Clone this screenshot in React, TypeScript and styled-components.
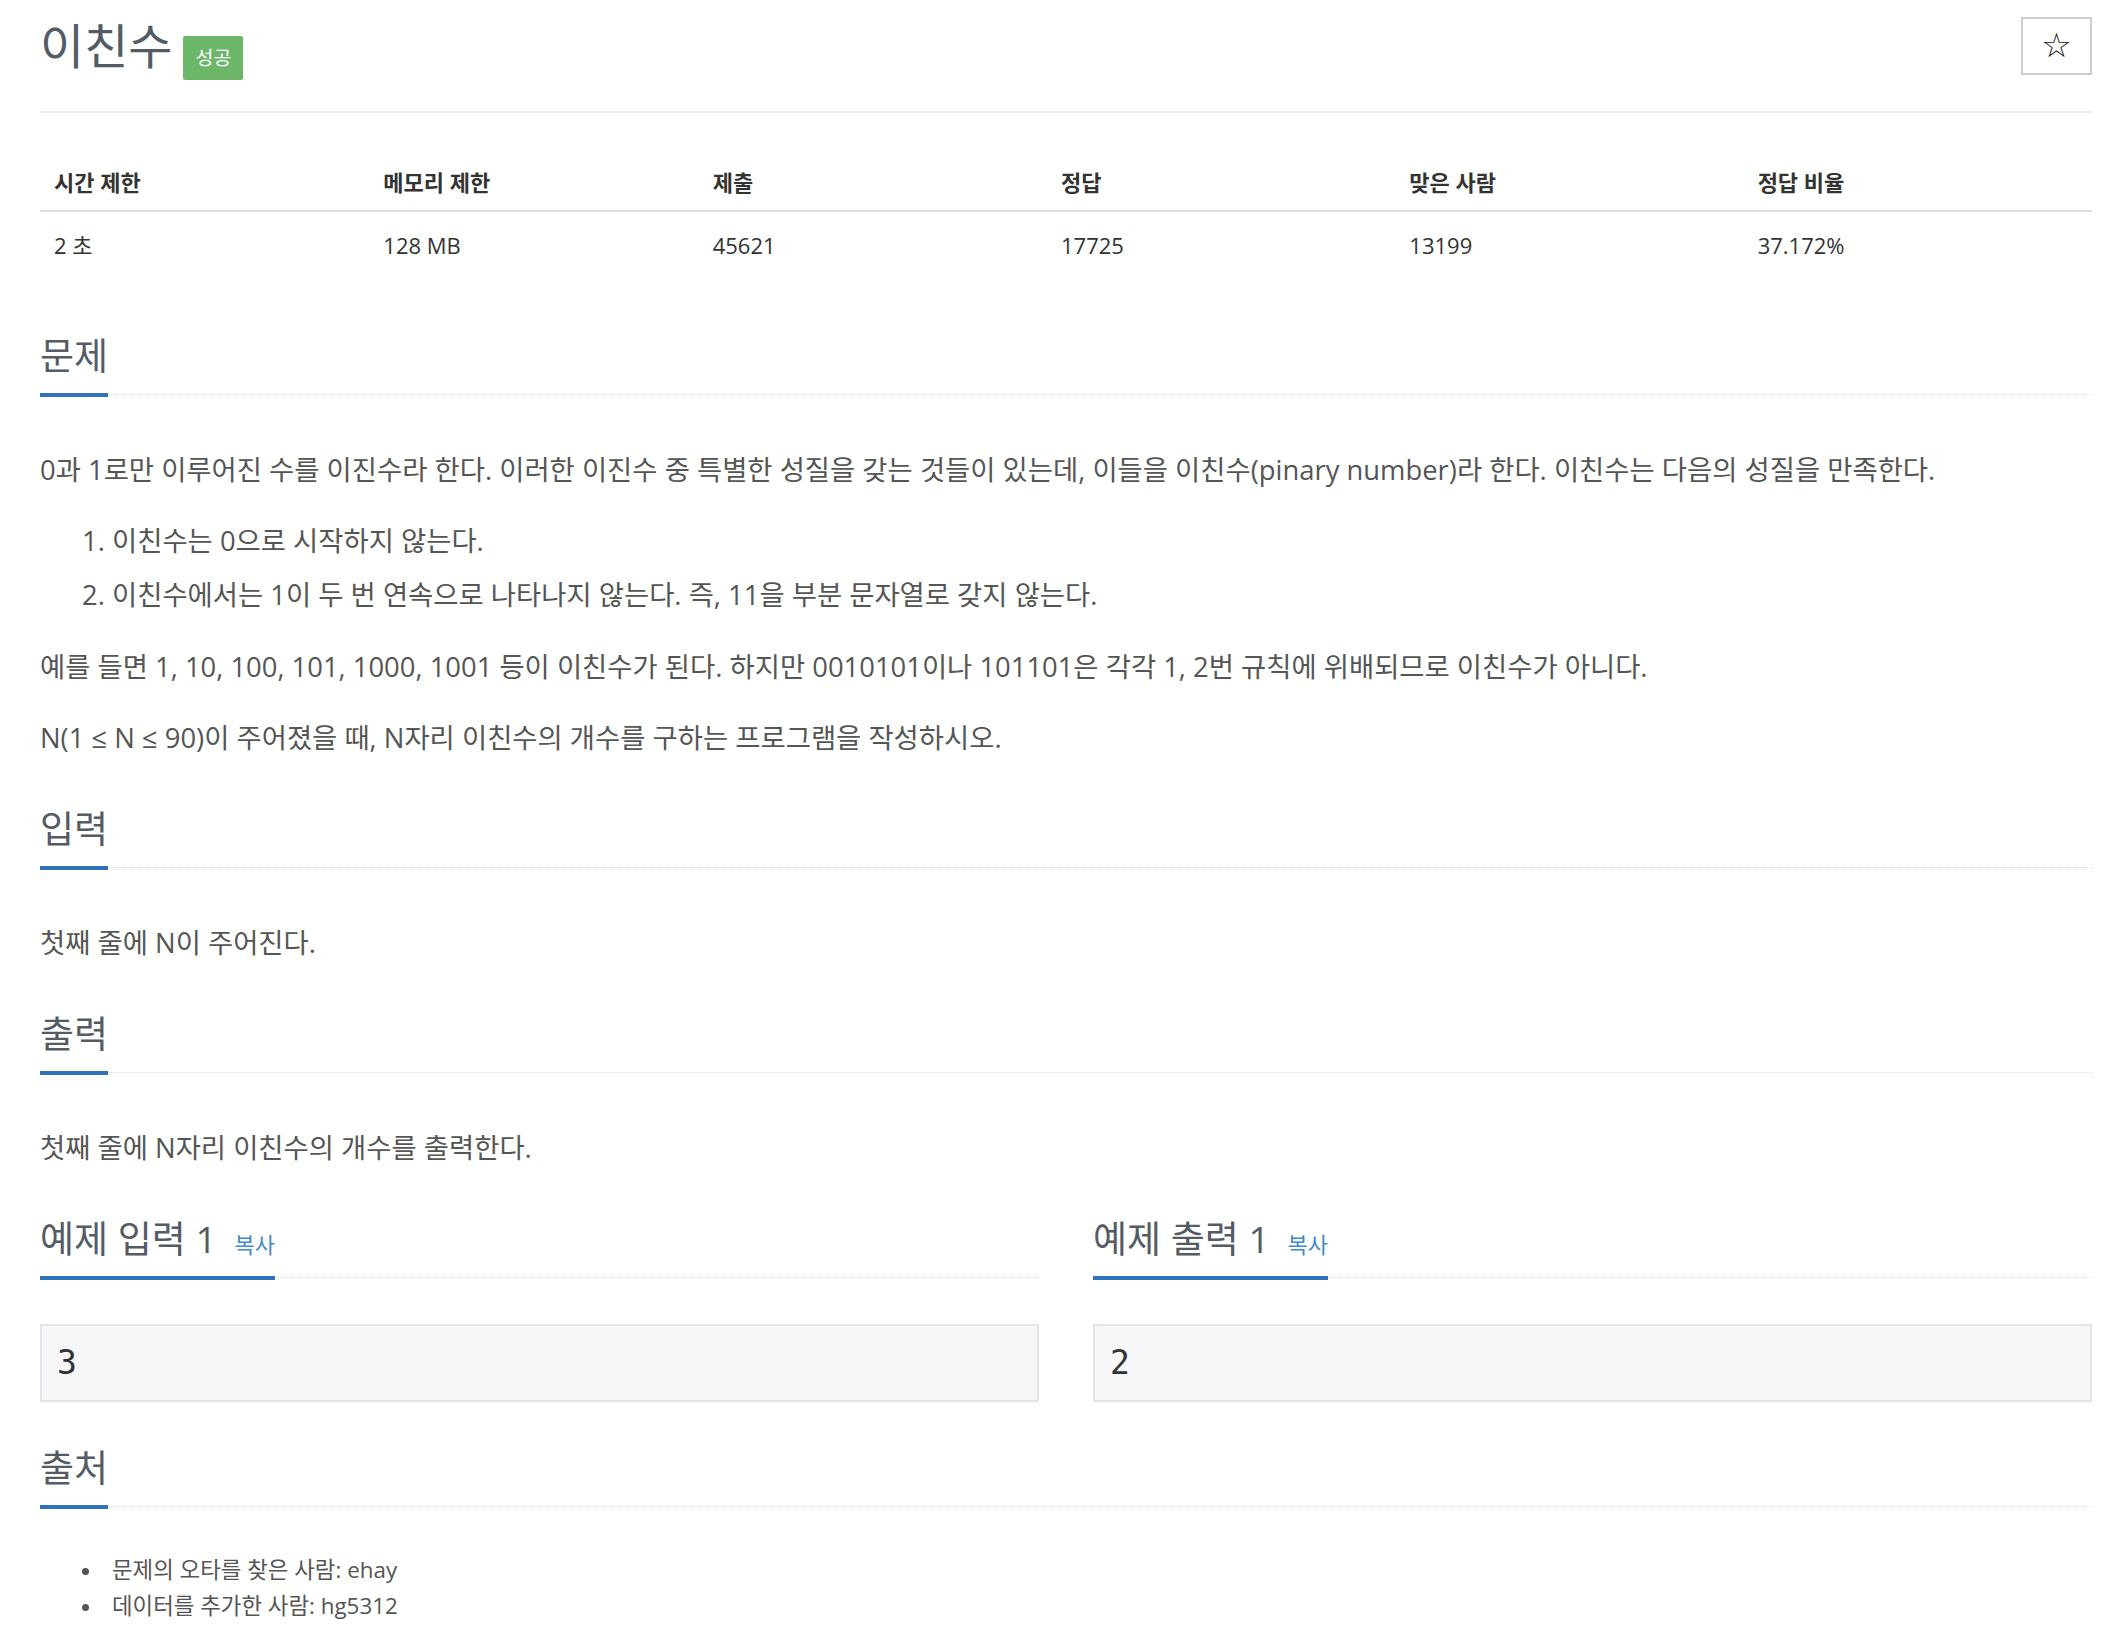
import React from "react";
import styled, { createGlobalStyle } from "styled-components";

const GlobalStyle = createGlobalStyle`
  html, body {
    margin: 0;
    padding: 0;
    background: #fff;
  }
  body {
    font-family: "Open Sans", "Noto Sans CJK KR", sans-serif;
    color: #555;
  }
`;

interface Limit {
  label: string;
  value: string;
  width: string;
}

const limits: Limit[] = [
  { label: "시간 제한", value: "2 초", width: "16%" },
  { label: "메모리 제한", value: "128 MB", width: "16%" },
  { label: "제출", value: "45621", width: "17%" },
  { label: "정답", value: "17725", width: "17%" },
  { label: "맞은 사람", value: "13199", width: "17%" },
  { label: "정답 비율", value: "37.172%", width: "17%" },
];

const samples = [
  { title: "예제 입력 1", data: "3" },
  { title: "예제 출력 1", data: "2" },
];

const App: React.FC = () => {
  return (
    <Page>
      <GlobalStyle />

      <Header>
        <TitleRow>
          <Title>이친수</Title>
          <Badge>성공</Badge>
        </TitleRow>
        <StarButton type="button">☆</StarButton>
      </Header>

      <InfoTable>
        <thead>
          <tr>
            {limits.map((limit) => (
              <HeadCell key={limit.label} $width={limit.width}>
                {limit.label}
              </HeadCell>
            ))}
          </tr>
        </thead>
        <tbody>
          <tr>
            {limits.map((limit) => (
              <DataCell key={limit.label}>{limit.value}</DataCell>
            ))}
          </tr>
        </tbody>
      </InfoTable>

      <Section>
        <Headline>
          <HeadlineTitle>문제</HeadlineTitle>
        </Headline>
        <Paragraph>
          0과 1로만 이루어진 수를 이진수라 한다. 이러한 이진수 중 특별한 성질을 갖는 것들이 있는데, 이들을
          이친수(pinary number)라 한다. 이친수는 다음의 성질을 만족한다.
        </Paragraph>
        <RuleList>
          <li>이친수는 0으로 시작하지 않는다.</li>
          <li>이친수에서는 1이 두 번 연속으로 나타나지 않는다. 즉, 11을 부분 문자열로 갖지 않는다.</li>
        </RuleList>
        <Paragraph>
          예를 들면 1, 10, 100, 101, 1000, 1001 등이 이친수가 된다. 하지만 0010101이나 101101은 각각 1, 2번
          규칙에 위배되므로 이친수가 아니다.
        </Paragraph>
        <Paragraph>N(1 ≤ N ≤ 90)이 주어졌을 때, N자리 이친수의 개수를 구하는 프로그램을 작성하시오.</Paragraph>
      </Section>

      <Section>
        <Headline>
          <HeadlineTitle>입력</HeadlineTitle>
        </Headline>
        <Paragraph>첫째 줄에 N이 주어진다.</Paragraph>
      </Section>

      <Section>
        <Headline>
          <HeadlineTitle>출력</HeadlineTitle>
        </Headline>
        <Paragraph>첫째 줄에 N자리 이친수의 개수를 출력한다.</Paragraph>
      </Section>

      <SampleRow>
        {samples.map((sample) => (
          <SampleColumn key={sample.title}>
            <Headline>
              <HeadlineTitle>
                {sample.title}
                <CopyLink>복사</CopyLink>
              </HeadlineTitle>
            </Headline>
            <SamplePre>{sample.data}</SamplePre>
          </SampleColumn>
        ))}
      </SampleRow>

      <Section>
        <Headline>
          <HeadlineTitle>출처</HeadlineTitle>
        </Headline>
        <SourceList>
          <li>문제의 오타를 찾은 사람: ehay</li>
          <li>데이터를 추가한 사람: hg5312</li>
        </SourceList>
      </Section>
    </Page>
  );
};

export default App;

const Page = styled.div`
  padding: 0 20px 40px 40px;
`;

const Header = styled.header`
  box-sizing: border-box;
  height: 113px;
  display: flex;
  justify-content: space-between;
  align-items: flex-start;
  padding-top: 17px;
  border-bottom: 2px solid #eeeeee;
`;

const TitleRow = styled.div`
  display: flex;
  align-items: flex-start;
  gap: 11px;
  height: 58px;
`;

const Title = styled.h1`
  margin: 0;
  font-size: 48px;
  line-height: 58px;
  font-weight: 400;
  color: #555b65;
`;

const Badge = styled.span`
  margin-top: 19px;
  height: 44px;
  line-height: 44px;
  padding: 0 12px;
  background-color: #6cb66a;
  color: #fff;
  font-size: 19.5px;
  border-radius: 2px;
`;

const StarButton = styled.button`
  box-sizing: border-box;
  width: 71px;
  height: 58px;
  display: flex;
  align-items: center;
  justify-content: center;
  padding: 0 0 2px;
  border: 2px solid #cccccc;
  background-color: #fff;
  color: #222;
  font-family: "DejaVu Sans", sans-serif;
  font-size: 34px;
  line-height: 1;
`;

const InfoTable = styled.table`
  width: 100%;
  border-collapse: collapse;
  table-layout: fixed;
  margin: 42px 0 61px;
  font-size: 22px;
  color: #333;
`;

const HeadCell = styled.th<{ $width: string }>`
  width: ${(p) => p.$width};
  text-align: left;
  font-weight: 700;
  padding: 14px;
  line-height: 27px;
  border-bottom: 2px solid #dddddd;
`;

const DataCell = styled.td`
  padding: 20px 14px 14px;
  line-height: 27px;
`;

const Section = styled.section`
  margin-top: 44px;
`;

const Headline = styled.div`
  display: flex;
  border-bottom: 1px dotted #d5dbe4;
  margin-bottom: 49px;
`;

const HeadlineTitle = styled.h2`
  margin: 0 0 -3px;
  padding-bottom: 15px;
  border-bottom: 4px solid #3173b9;
  font-size: 37px;
  line-height: 44px;
  font-weight: 400;
  color: #555b65;
`;

const CopyLink = styled.span`
  margin-left: 18px;
  font-size: 22px;
  line-height: 1;
  color: #428bca;
`;

const Paragraph = styled.p`
  margin: 0 0 20px;
  font-size: 27.4px;
  line-height: 51px;
`;

const RuleList = styled.ol`
  margin: -1px 0 19px;
  padding-left: 72px;
  font-size: 27.4px;
  line-height: 54px;
`;

const SampleRow = styled.section`
  display: grid;
  grid-template-columns: 1fr 1fr;
  column-gap: 54px;
  margin-top: 44px;
`;

const SampleColumn = styled.div`
  min-width: 0;
`;

const SamplePre = styled.pre`
  margin: -3px 0 0;
  padding: 13px 15px;
  border: 2px solid #e3e3ea;
  background-color: #f7f7f9;
  font-family: "DejaVu Sans Mono", monospace;
  font-size: 33px;
  line-height: 48px;
  color: #333;
`;

const SourceList = styled.ul`
  margin: -4px 0 0;
  padding-left: 72px;
  list-style: none;
  font-size: 22.4px;
  line-height: 36px;

  li {
    display: flex;
    align-items: center;
  }

  li::before {
    content: "";
    flex: none;
    width: 7px;
    height: 7px;
    margin: 2px 23px 0 -30px;
    border-radius: 50%;
    background-color: #555;
  }
`;
